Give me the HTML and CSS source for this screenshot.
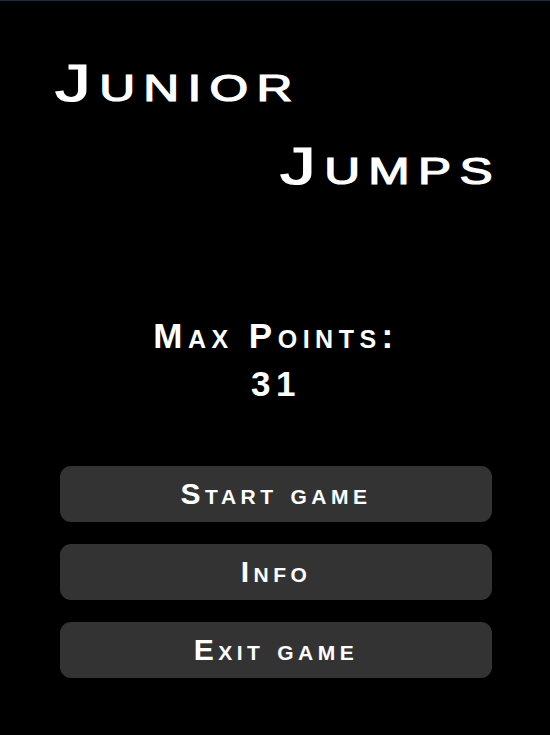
FILE: index.html
```html
<!DOCTYPE html>
<html lang="en">

<head>
    <meta charset="UTF-8">
    <meta name="viewport" content="width=device-width, initial-scale=1.0">
    <title>Junior Jumps</title>
    <link rel="stylesheet" href="styles.css">
</head>

<body>
    <main class="screen">
        <h1 class="title">
            <span class="title-line">Junior</span>
            <span class="title-line title-right">Jumps</span>
        </h1>
        <div class="score">
            <p class="score-label">Max Points:</p>
            <p class="score-value">31</p>
        </div>
        <nav class="menu">
            <button class="menu-btn">Start game</button>
            <button class="menu-btn">Info</button>
            <button class="menu-btn">Exit game</button>
        </nav>
    </main>
</body>

</html>
```

FILE: styles.css
```css
html,
body {
    margin: 0;
    height: 100%;
    background-color: #000;
}

body {
    border-top: 1px solid #1f2a48;
    box-sizing: border-box;
    color: #fff;
}

.screen {
    display: flex;
    flex-direction: column;
    padding: 0 58px 0 60px;
}

.title {
    margin: 41px 0 0 -5px;
    font-family: "Liberation Sans", sans-serif;
    font-weight: 400;
    font-size: 52px;
    line-height: 83px;
    font-variant: small-caps;
    letter-spacing: 6px;
    -webkit-text-stroke: 1.2px #fff;
}

/* the game logo is drawn stretched sideways */
.title-line {
    display: block;
    width: fit-content;
    transform: scaleX(1.38);
    transform-origin: left center;
}

.title-right {
    margin-left: 225px;
}

.score {
    margin-top: 104px;
    text-align: center;
    font-family: "Liberation Sans", sans-serif;
    font-weight: bold;
    font-variant: small-caps;
    font-size: 35px;
    letter-spacing: 5.5px;
}

.score p {
    margin: 0;
    line-height: 48px;
}

.menu {
    display: flex;
    flex-direction: column;
    gap: 22px;
    margin-top: 58px;
}

.menu-btn {
    height: 56px;
    border: none;
    border-radius: 11px;
    background-color: #333;
    color: #fff;
    font-family: "Liberation Sans", sans-serif;
    font-weight: bold;
    font-variant: small-caps;
    font-size: 30px;
    letter-spacing: 4.5px;
}
```
